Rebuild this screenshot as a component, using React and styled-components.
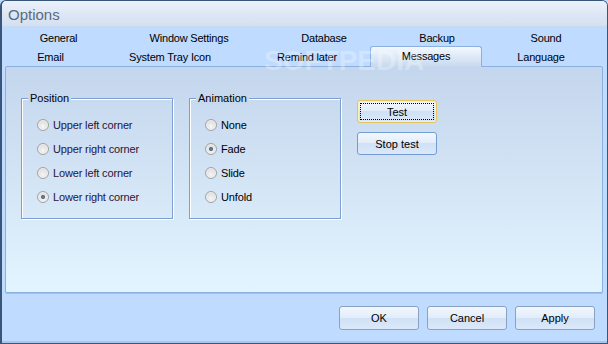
import React from "react";
import styled, { createGlobalStyle, css } from "styled-components";

const GlobalStyle = createGlobalStyle`
  html, body {
    margin: 0;
    padding: 0;
    background: #bfdbff;
  }
  body {
    width: 608px;
    height: 344px;
    overflow: hidden;
    font-family: "Liberation Sans", Arial, sans-serif;
  }
`;

const Window = styled.div`
  position: relative;
  width: 608px;
  height: 344px;
  box-sizing: border-box;
  border: 1px solid #3a557a;
  border-left-width: 2px;
  border-radius: 6px 6px 0 0;
  background: #bfdbff;
  display: flex;
  flex-direction: column;
  overflow: hidden;
`;

const TitleBar = styled.div`
  height: 26px;
  flex-shrink: 0;
  padding-left: 6px;
  background: linear-gradient(#eaf1fa, #dee8f5 50%, #d3e0f1);
  border-bottom: 1px solid #c9d8ec;
  box-sizing: border-box;
  color: #5a6a80;
  font-size: 15px;
  line-height: 28px;
`;

const Client = styled.div`
  flex: 1;
  display: flex;
  flex-direction: column;
  padding: 2px 4px 0 3px;
  background: #bfdbff;
  box-shadow: inset 0 -2px 0 #a9c5ea;
`;

const TabRow = styled.div`
  display: flex;
  height: ${p => p.h}px;
`;

const Tab = styled.div`
  width: ${p => p.w}px;
  flex-shrink: 0;
  text-align: center;
  font-size: 11px;
  letter-spacing: -0.2px;
  color: #000;
  line-height: ${p => p.lh}px;
  ${p => p.selected && css`
    position: relative;
    z-index: 2;
    height: 21px;
    margin-top: -1px;
    box-sizing: border-box;
    border: 1px solid #8cb0e0;
    border-bottom: none;
    border-radius: 3px 3px 0 0;
    background: linear-gradient(#f3f8fe, #d9e6f5 60%, #c6d8ee);
    line-height: 18px;
  `}
`;

const Watermark = styled.span`
  position: absolute;
  left: 262px;
  top: 44px;
  z-index: 3;
  font-size: 28px;
  font-weight: bold;
  color: rgba(255, 255, 255, 0.28);
  pointer-events: none;
`;

const Panel = styled.div`
  height: 227px;
  box-sizing: border-box;
  border: 1px solid #8cb0e0;
  border-radius: 2px;
  background: linear-gradient(#c4d6ed, #d3e4f5 50%, #e2f5ff);
  box-shadow: 0 1px 0 #a4c0e4;
  display: flex;
  align-items: flex-start;
  gap: 16px;
  padding: 31px 0 0 15px;
`;

const Group = styled.div`
  position: relative;
  width: 152px;
  height: 121px;
  box-sizing: border-box;
  border: 1px solid #7d9fd2;
  box-shadow: 1px 1px 0 #fff, inset 1px 1px 0 #fff;
  padding: 14px 0 0 15px;
`;

const Caption = styled.span`
  position: absolute;
  top: -7px;
  left: 6px;
  padding: 0 2px;
  background: #c7d9ee;
  font-size: 11px;
  line-height: 13px;
  color: #000;
`;

const RadioRow = styled.div`
  height: 24px;
  display: flex;
  align-items: center;
  gap: 4px;
  font-size: 11px;
  letter-spacing: -0.15px;
  color: ${p => (p.tint ? "#2a1438" : "#000")};
`;

const RadioDot = styled.span`
  position: relative;
  width: 12px;
  height: 12px;
  box-sizing: border-box;
  border-radius: 50%;
  border: 1px solid #a2a2a2;
  background: radial-gradient(circle at 50% 65%, #f6f6f6 0, #e2e2e2 55%, #cdcdcd 100%);
  box-shadow: inset 0 0 0 1px #f3f3f3;
  ${p => p.checked && css`
    &::after {
      content: "";
      position: absolute;
      left: 3px;
      top: 3px;
      width: 4px;
      height: 4px;
      border-radius: 50%;
      background: radial-gradient(#6d8ab0, #23405f);
    }
  `}
`;

const ButtonColumn = styled.div`
  display: flex;
  flex-direction: column;
  gap: 9px;
  margin-top: 2px;
`;

const Button = styled.button`
  position: relative;
  width: 80px;
  height: ${p => p.h || 23}px;
  padding: 0;
  border: 1px solid ${p => (p.footer ? "#8aa1c2" : "#739cd3")};
  border-radius: 3px;
  background: linear-gradient(#f2f7fd, #e2edfa 48%, #d0e1f6 50%, #dbe8f9);
  font-family: "Liberation Sans", Arial, sans-serif;
  font-size: 11px;
  color: #000;
  ${p => p.focused && css`
    border-color: #e6c55e;
    box-shadow: inset 0 0 0 1px #fbeeb8;
    &::after {
      content: "";
      position: absolute;
      inset: 2px;
      border: 1px dotted #000;
    }
  `}
`;

const Footer = styled.div`
  display: flex;
  justify-content: flex-end;
  gap: 8px;
  padding: 13px 8px 0 0;
`;

const positions = ["Upper left corner", "Upper right corner", "Lower left corner", "Lower right corner"];
const animations = ["None", "Fade", "Slide", "Unfold"];

export default function App() {
  return (
    <>
      <GlobalStyle />
      <Window>
        <TitleBar>Options</TitleBar>
        <Client>
          <Watermark>SOFTPEDIA</Watermark>
          <TabRow h={18}>
            <Tab w={107} lh={19}>General</Tab>
            <Tab w={154} lh={19}>Window Settings</Tab>
            <Tab w={116} lh={19}>Database</Tab>
            <Tab w={110} lh={19}>Backup</Tab>
            <Tab w={108} lh={19}>Sound</Tab>
          </TabRow>
          <TabRow h={19}>
            <Tab w={91} lh={20}>Email</Tab>
            <Tab w={148} lh={20}>System Tray Icon</Tab>
            <Tab w={126} lh={20}>Remind later</Tab>
            <Tab w={112} lh={20} selected>Messages</Tab>
            <Tab w={118} lh={20}>Language</Tab>
          </TabRow>
          <Panel>
            <Group>
              <Caption>Position</Caption>
              {positions.map((p, i) => (
                <RadioRow key={p} tint>
                  <RadioDot checked={i === 3} />
                  {p}
                </RadioRow>
              ))}
            </Group>
            <Group>
              <Caption>Animation</Caption>
              {animations.map((a, i) => (
                <RadioRow key={a}>
                  <RadioDot checked={i === 1} />
                  {a}
                </RadioRow>
              ))}
            </Group>
            <ButtonColumn>
              <Button focused>Test</Button>
              <Button>Stop test</Button>
            </ButtonColumn>
          </Panel>
          <Footer>
            <Button footer h={24}>OK</Button>
            <Button footer h={24}>Cancel</Button>
            <Button footer h={24}>Apply</Button>
          </Footer>
        </Client>
      </Window>
    </>
  );
}
